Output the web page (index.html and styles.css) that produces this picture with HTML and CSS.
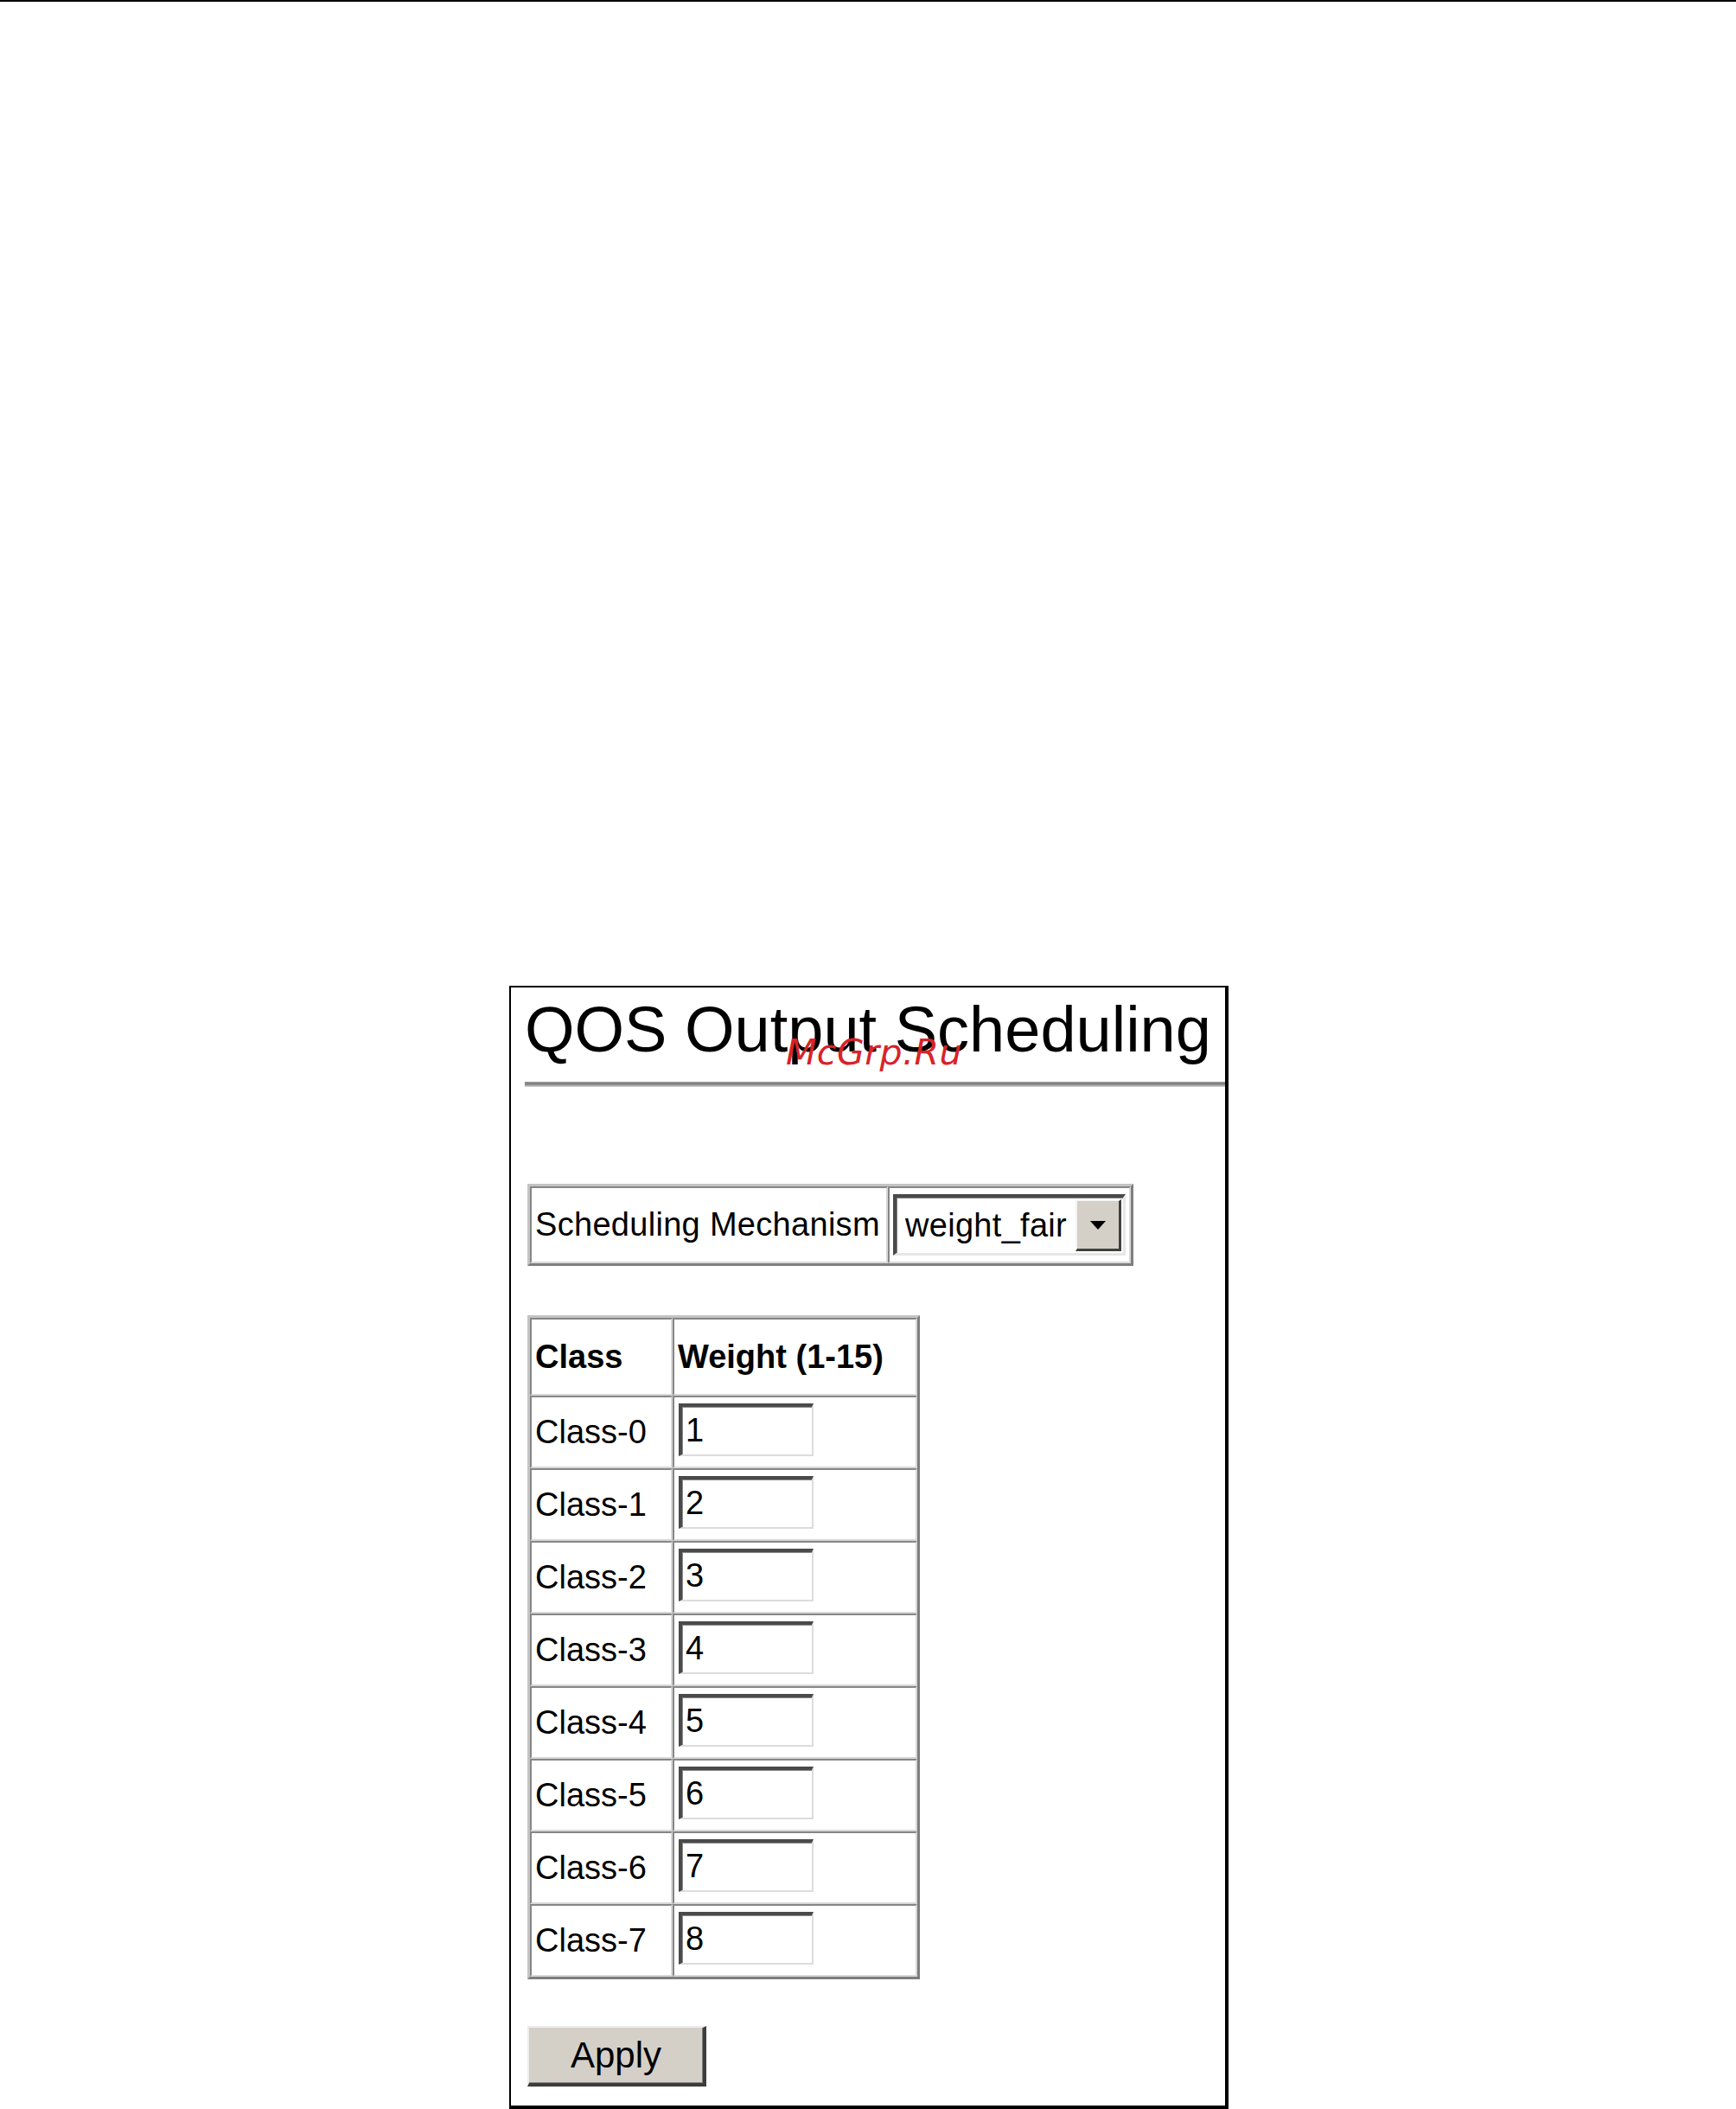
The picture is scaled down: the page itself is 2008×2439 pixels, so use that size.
FILE: index.html
```html
<!DOCTYPE html>
<html>
<head>
<meta charset="utf-8">
<title>QOS Output Scheduling</title>
<link rel="stylesheet" href="styles.css">
</head>
<body>
<div class="topline"></div>
<div class="panel">
  <h1 class="title">QOS Output Scheduling</h1>
  <div class="rule"></div>
  <div class="watermark">McGrp.Ru</div>

  <table class="mech">
    <tr>
      <td class="mech-label">Scheduling Mechanism</td>
      <td class="mech-value">
        <div class="select">
          <span class="select-text">weight_fair</span>
          <span class="select-btn">
            <svg width="18" height="10" viewBox="0 0 18 10"><polygon points="0,0 18,0 9,10" fill="#000"/></svg>
          </span>
        </div>
      </td>
    </tr>
  </table>

  <table class="classes">
    <tr>
      <th class="c1">Class</th>
      <th class="c2">Weight (1-15)</th>
    </tr>
    <tr><td class="c1">Class-0</td><td class="c2"><input class="weight" type="text" value="1"></td></tr>
    <tr><td class="c1">Class-1</td><td class="c2"><input class="weight" type="text" value="2"></td></tr>
    <tr><td class="c1">Class-2</td><td class="c2"><input class="weight" type="text" value="3"></td></tr>
    <tr><td class="c1">Class-3</td><td class="c2"><input class="weight" type="text" value="4"></td></tr>
    <tr><td class="c1">Class-4</td><td class="c2"><input class="weight" type="text" value="5"></td></tr>
    <tr><td class="c1">Class-5</td><td class="c2"><input class="weight" type="text" value="6"></td></tr>
    <tr><td class="c1">Class-6</td><td class="c2"><input class="weight" type="text" value="7"></td></tr>
    <tr><td class="c1">Class-7</td><td class="c2"><input class="weight" type="text" value="8"></td></tr>
  </table>

  <button class="apply" type="button">Apply</button>
</div>
</body>
</html>
```
FILE: styles.css
```css
html, body {
  margin: 0;
  padding: 0;
  background: #ffffff;
}
body {
  width: 2008px;
  height: 2439px;
  overflow: hidden;
  font-family: "Liberation Sans", Arial, sans-serif;
  color: #000;
}
.topline {
  height: 2px;
  background: #000;
}
.panel {
  position: relative;
  box-sizing: border-box;
  margin: 1138px 0 0 589px;
  width: 832px;
  height: 1299px;
  border-style: solid;
  border-color: #000;
  border-width: 2px 4px 4px 2px;
  padding: 0 0 0 19px;
  display: flex;
  flex-direction: column;
  align-items: flex-start;
}
.title {
  margin: 12px 0 0 -3px;
  font-size: 74px;
  font-weight: normal;
  line-height: 73px;
  height: 73px;
  letter-spacing: 0;
  white-space: nowrap;
}
.rule {
  margin: 24px 0 0 -3px;
  align-self: stretch;
  height: 6px;
  background: linear-gradient(#9a9a9a, #7c7c7c 45%, #a8a8a8 70%, #d6d6d6);
}
.watermark {
  position: absolute;
  left: 318px;
  top: 55px;
  font-family: "DejaVu Sans", sans-serif;
  font-style: italic;
  font-size: 41px;
  line-height: 41px;
  letter-spacing: 0.5px;
  color: #d8232a;
}

/* tables */
table {
  border-collapse: separate;
  border-spacing: 0;
  border-style: solid;
  border-width: 3px;
  border-color: #c4c4c4 #7e7e7e #7e7e7e #c4c4c4;
  font-size: 38px;
}
td, th {
  border-style: solid;
  border-width: 2px;
  border-color: #868686 #d8d8d8 #d8d8d8 #868686;
  text-align: left;
  white-space: nowrap;
}
.mech {
  margin-top: 112px;
}
.mech-label {
  width: 414px;
  box-sizing: border-box;
  padding: 7px 4px;
  vertical-align: middle;
  letter-spacing: 0.3px;
}
.mech-value {
  padding: 7px 4px;
}
.select {
  box-sizing: border-box;
  width: 269px;
  height: 71px;
  display: flex;
  align-items: stretch;
  background: #fff;
  border-style: solid;
  border-width: 4px 3px 3px 4px;
  border-color: #4a4a4a #e6e6e6 #e6e6e6 #4a4a4a;
  box-shadow: inset 1px 1px 0 #808080;
}
.select-text {
  flex: 1;
  padding-left: 10px;
  display: flex;
  align-items: center;
  font-size: 38px;
  letter-spacing: 0.3px;
}
.select-btn {
  width: 48px;
  margin: 2px 2px 2px 0;
  display: flex;
  align-items: center;
  justify-content: center;
  background: #d4d0c8;
  border-style: solid;
  border-width: 2px 3px 3px 2px;
  border-color: #f4f4f4 #404040 #404040 #f4f4f4;
}

.classes {
  margin-top: 57px;
}
.classes th {
  font-weight: bold;
  height: 90px;
  padding: 0 4px;
  box-sizing: border-box;
  vertical-align: middle;
}
.classes .c1 {
  width: 165px;
  box-sizing: border-box;
}
.classes .c2 {
  width: 283px;
  box-sizing: border-box;
}
.classes td.c1 {
  padding: 0 4px;
  vertical-align: middle;
}
.classes td.c2 {
  padding: 7px 4px 12px 5px;
  vertical-align: top;
}
.weight {
  display: block;
  box-sizing: border-box;
  width: 156px;
  height: 61px;
  margin: 0;
  padding: 0 0 0 4px;
  font-family: "Liberation Sans", Arial, sans-serif;
  font-size: 38px;
  color: #000;
  background: #fff;
  border-style: solid;
  border-width: 4px 2px 2px 4px;
  border-color: #4a4a4a #dcdcdc #dcdcdc #4a4a4a;
  box-shadow: inset 1px 1px 0 #8a8a8a;
  outline: none;
}

.apply {
  margin-top: 54px;
  box-sizing: border-box;
  width: 207px;
  height: 70px;
  padding: 0;
  font-family: "Liberation Sans", Arial, sans-serif;
  font-size: 42px;
  color: #000;
  background: #d4d0c8;
  border-style: solid;
  border-width: 2px 4px 4px 2px;
  border-color: #ececec #3c3c3c #3c3c3c #ececec;
  box-shadow: inset -1px -1px 0 #808080;
}
```
